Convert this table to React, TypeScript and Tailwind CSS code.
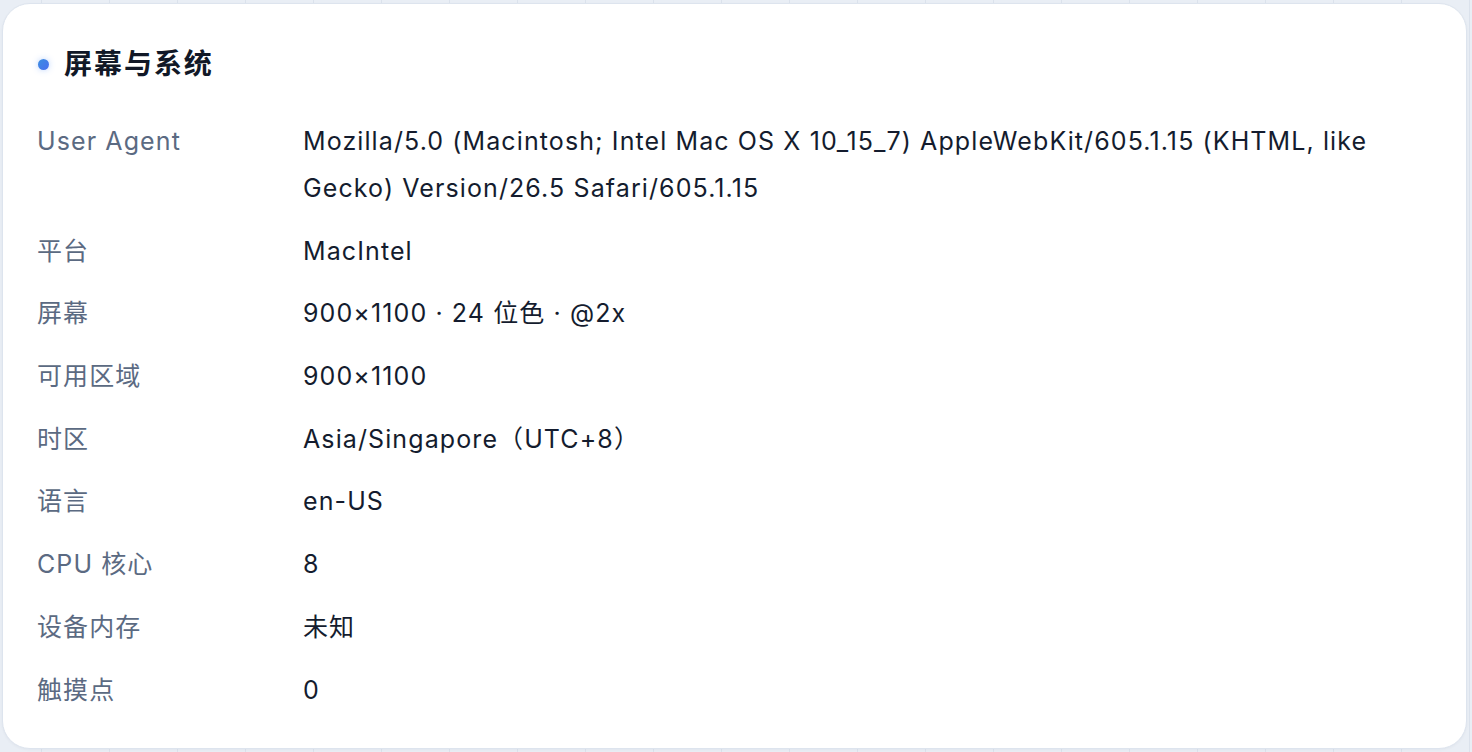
const rows: { label: string; value: string }[] = [
  {
    label: "User Agent",
    value:
      "Mozilla/5.0 (Macintosh; Intel Mac OS X 10_15_7) AppleWebKit/605.1.15 (KHTML, like Gecko) Version/26.5 Safari/605.1.15",
  },
  { label: "平台", value: "MacIntel" },
  { label: "屏幕", value: "900×1100 · 24 位色 · @2x" },
  { label: "可用区域", value: "900×1100" },
  { label: "时区", value: "Asia/Singapore（UTC+8）" },
  { label: "语言", value: "en-US" },
  { label: "CPU 核心", value: "8" },
  { label: "设备内存", value: "未知" },
  { label: "触摸点", value: "0" },
];

export default function App() {
  return (
    <div className="min-h-screen w-full bg-[#e9eef5] bg-[linear-gradient(to_right,#dbe2ec_1px,transparent_1px)] bg-[size:68px_100%] bg-[position:41px_0] pt-[3px] pl-[2px] pr-[5px] font-['Inter','Noto_Sans_CJK_SC',sans-serif]">
      <section className="rounded-[28px] border border-[#dde4ee] bg-white pl-[34px] pr-[36px] pt-[42px] pb-[34px] shadow-[0_1px_3px_rgba(15,23,42,0.04)]">
        <h2 className="flex h-[36px] items-center gap-[15px] text-[28px] font-bold tracking-[0.07em] text-[#111827]">
          <span className="ml-[1px] h-[11px] w-[11px] rounded-full bg-[linear-gradient(135deg,#3b8fe0,#4a6ff0)] shadow-[0_0_6px_rgba(59,130,246,0.35)]" />
          屏幕与系统
        </h2>

        <dl className="mt-[36px] grid grid-cols-[266px_1fr] gap-y-[15.7px] text-[25px] leading-[47px] tracking-[1.1px]">
          {rows.map((row) => (
            <div key={row.label} className="contents">
              <dt className="text-[#5b6a82]">{row.label}</dt>
              <dd className="pr-[20px] text-[#141c2e]">{row.value}</dd>
            </div>
          ))}
        </dl>
      </section>
    </div>
  );
}
